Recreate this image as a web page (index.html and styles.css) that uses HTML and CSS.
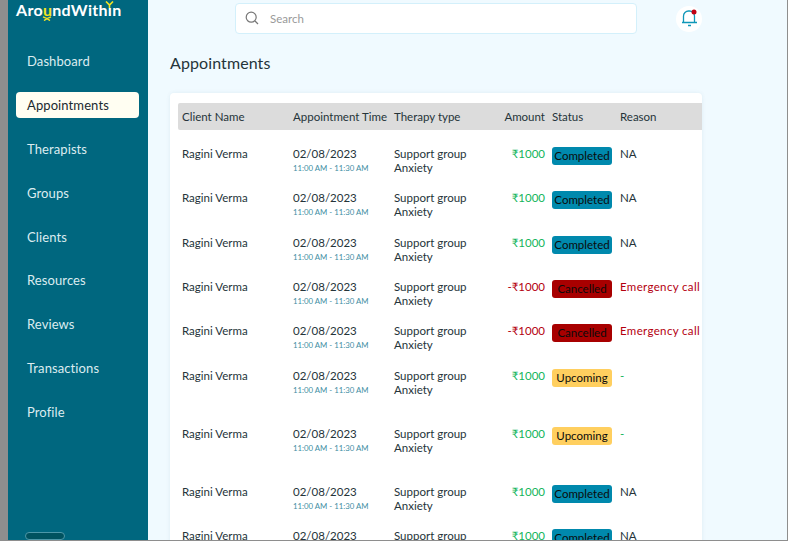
FILE: index.html
```html
<!DOCTYPE html>
<html lang="en">

<head>
    <meta charset="UTF-8">
    <meta name="viewport" content="width=device-width, initial-scale=1.0">
    <title>Appointments</title>
    <link rel="stylesheet" href="styles.css">
</head>

<body>
    <div class="frame">
        <!-- Sidebar -->
        <aside class="sidebar">
            <div class="logo">Aro<span class="logo-u">u<svg viewBox="0 0 10 5" width="10" height="5"><path d="M1 .8 5 2.600 9 .8M2 4.600 5 2.600 8 4.600" fill="none" stroke="#f2e422" stroke-width="1.300"/></svg></span>ndWith<span class="logo-i">ı<svg viewBox="0 0 9 7" width="9" height="7"><path d="M1 .5 4.500 4 8 .5M4.500 4V7" fill="none" stroke="#f2e422" stroke-width="1.600"/></svg></span>n</div>
            <nav class="nav">
                <a class="nav-item">Dashboard</a>
                <a class="nav-item active">Appointments</a>
                <a class="nav-item">Therapists</a>
                <a class="nav-item">Groups</a>
                <a class="nav-item">Clients</a>
                <a class="nav-item">Resources</a>
                <a class="nav-item">Reviews</a>
                <a class="nav-item">Transactions</a>
                <a class="nav-item">Profile</a>
            </nav>
            <div class="side-handle"></div>
        </aside>

        <main class="main">
            <div class="topbar">
                <div class="search">
                    <svg viewBox="0 0 16 16" width="16" height="16"><circle cx="7.200" cy="7.200" r="5" fill="none" stroke="#777" stroke-width="1.200"/><path d="M11 11l3 3" stroke="#777" stroke-width="1.200" fill="none"/></svg>
                    <span>Search</span>
                </div>
                <div class="bell">
                    <svg viewBox="0 0 18 20" width="18" height="20"><path d="M3.500 13V7a5 5 0 0 1 5-5h1a5 5 0 0 1 5 5v6M2 13.500h15" fill="none" stroke="#0f97b8" stroke-width="1.300"/><path d="M8 16.500h3" stroke="#0f97b8" stroke-width="1.500"/><circle cx="14" cy="3" r="2.500" fill="#c00012"/></svg>
                </div>
            </div>

            <h1 class="title">Appointments</h1>

            <div class="card">
                <div class="row head">
                    <div>Client Name</div>
                    <div>Appointment Time</div>
                    <div>Therapy type</div>
                    <div class="amount">Amount</div>
                    <div class="status-head">Status</div>
                    <div>Reason</div>
                </div>

                <div class="row">
                    <div>Ragini Verma</div>
                    <div>02/08/2023<small>11:00 AM - 11:30 AM</small></div>
                    <div>Support group<br>Anxiety</div>
                    <div class="amount plus">₹1000</div>
                    <div><span class="badge completed">Completed</span></div>
                    <div>NA</div>
                </div>
                <div class="row">
                    <div>Ragini Verma</div>
                    <div>02/08/2023<small>11:00 AM - 11:30 AM</small></div>
                    <div>Support group<br>Anxiety</div>
                    <div class="amount plus">₹1000</div>
                    <div><span class="badge completed">Completed</span></div>
                    <div>NA</div>
                </div>
                <div class="row">
                    <div>Ragini Verma</div>
                    <div>02/08/2023<small>11:00 AM - 11:30 AM</small></div>
                    <div>Support group<br>Anxiety</div>
                    <div class="amount plus">₹1000</div>
                    <div><span class="badge completed">Completed</span></div>
                    <div>NA</div>
                </div>
                <div class="row">
                    <div>Ragini Verma</div>
                    <div>02/08/2023<small>11:00 AM - 11:30 AM</small></div>
                    <div>Support group<br>Anxiety</div>
                    <div class="amount minus">-₹1000</div>
                    <div><span class="badge cancelled">Cancelled</span></div>
                    <div class="minus reason">Emergency call from family</div>
                </div>
                <div class="row">
                    <div>Ragini Verma</div>
                    <div>02/08/2023<small>11:00 AM - 11:30 AM</small></div>
                    <div>Support group<br>Anxiety</div>
                    <div class="amount minus">-₹1000</div>
                    <div><span class="badge cancelled">Cancelled</span></div>
                    <div class="minus reason">Emergency call from family</div>
                </div>
                <div class="row tall">
                    <div>Ragini Verma</div>
                    <div>02/08/2023<small>11:00 AM - 11:30 AM</small></div>
                    <div>Support group<br>Anxiety</div>
                    <div class="amount plus">₹1000</div>
                    <div><span class="badge upcoming">Upcoming</span></div>
                    <div class="plus">-</div>
                </div>
                <div class="row tall">
                    <div>Ragini Verma</div>
                    <div>02/08/2023<small>11:00 AM - 11:30 AM</small></div>
                    <div>Support group<br>Anxiety</div>
                    <div class="amount plus">₹1000</div>
                    <div><span class="badge upcoming">Upcoming</span></div>
                    <div class="plus">-</div>
                </div>
                <div class="row">
                    <div>Ragini Verma</div>
                    <div>02/08/2023<small>11:00 AM - 11:30 AM</small></div>
                    <div>Support group<br>Anxiety</div>
                    <div class="amount plus">₹1000</div>
                    <div><span class="badge completed">Completed</span></div>
                    <div>NA</div>
                </div>
                <div class="row">
                    <div>Ragini Verma</div>
                    <div>02/08/2023<small>11:00 AM - 11:30 AM</small></div>
                    <div>Support group<br>Anxiety</div>
                    <div class="amount plus">₹1000</div>
                    <div><span class="badge completed">Completed</span></div>
                    <div>NA</div>
                </div>
            </div>
        </main>
    </div>
</body>

</html>
```

FILE: styles.css
```css
* {
    box-sizing: border-box;
}

body {
    margin: 0px;
    padding: 0px;
    font-family: Lato, "Noto Sans", sans-serif;
    height: 100vh;
    overflow: hidden;
    background: #8e8e8e;
}

.frame {
    display: flex;
    height: 540px;
    margin-left: 8px;
    margin-right: 1px;
    overflow: hidden;
}

/* Sidebar */
.sidebar {
    width: 140px;
    flex-shrink: 0;
    display: flex;
    flex-direction: column;
    background: #00677f;
}

.logo {
    height: 48px;
    padding: 0px 0px 0px 8px;
    font-size: 16px;
    line-height: 20px;
    font-weight: 700;
    letter-spacing: 0.3px;
    color: #fff;
}

.logo-u {
    position: relative;
    color: #f2e422;
}

.logo-u svg {
    position: absolute;
    left: -1px;
    top: 16px;
}

.logo-i {
    position: relative;
}

.logo-i svg {
    position: absolute;
    left: -3px;
    top: 1px;
}

.nav {
    display: flex;
    flex-direction: column;
    gap: 17.900px;
    padding: 0px 9px 0px 8px;
}

.nav-item {
    height: 26px;
    padding-left: 11px;
    font-size: 13px;
    line-height: 26px;
    letter-spacing: 0.1px;
    color: #dcecf0;
    border-radius: 4px;
}

.nav-item.active {
    background: #fffef2;
    color: #1b2a30;
}

.side-handle {
    width: 40px;
    height: 8px;
    margin: auto 0px 0px 17px;
    background: #00525f;
    border: 1px solid #4d97a8;
    border-radius: 5px;
}

/* Main area */
.main {
    flex: 1;
    min-width: 0;
    padding: 3px 85px 0px 22px;
    background: #f0faff;
    overflow: hidden;
}

.topbar {
    display: flex;
    align-items: flex-start;
    height: 32px;
    padding-left: 65px;
}

.search {
    width: 402px;
    height: 31px;
    display: flex;
    align-items: center;
    gap: 10px;
    padding: 0px 0px 1px 8px;
    background: #fff;
    border: 1px solid #d3f0fb;
    border-radius: 4px;
    font-size: 11.500px;
    color: #9a9a9a;
}

.bell {
    width: 26px;
    height: 26px;
    margin: 3px 0px 0px 39px;
    display: flex;
    align-items: center;
    justify-content: center;
    background: #fff;
    border-radius: 50%;
}

.title {
    margin: 18px 0px 0px 0px;
    height: 40px;
    font-size: 16px;
    line-height: 20px;
    font-weight: 400;
    letter-spacing: 0.1px;
    color: #25343a;
}

.card {
    width: 532px;
    height: 460px;
    padding: 10px 0px 0px 8px;
    background: #fff;
    border-radius: 4px 4px 0px 0px;
    box-shadow: 0px 0px 4px rgba(0, 80, 110, 0.08);
    overflow: hidden;
}

.row {
    display: grid;
    grid-template-columns: 111px 101px 96px 55px 75px 1fr;
    height: 44.330px;
    padding: 17px 0px 0px 4px;
    font-size: 11.500px;
    line-height: 14px;
    color: #25343a;
    white-space: nowrap;
}

.row.tall {
    height: 58px;
}

.row.head {
    height: 27px;
    padding-top: 7px;
    background: #dcdcdc;
    border-radius: 2px 0px 0px 2px;
}

.row small {
    display: block;
    font-size: 7.800px;
    color: #3f8ea3;
}

.amount {
    text-align: right;
}

.status-head {
    padding-left: 7px;
}

.plus {
    color: #13b55c;
}

.minus {
    color: #b4000f;
}

.reason {
    letter-spacing: 0.350px;
}

.badge {
    display: block;
    width: 60px;
    height: 18px;
    margin-left: 7px;
    text-align: center;
    font-size: 11.500px;
    line-height: 18px;
    color: #0b0b0b;
    border-radius: 3px;
}

.badge.completed {
    background: #0089ad;
}

.badge.cancelled {
    background: #a80000;
}

.badge.upcoming {
    background: #ffcf5f;
}
```
